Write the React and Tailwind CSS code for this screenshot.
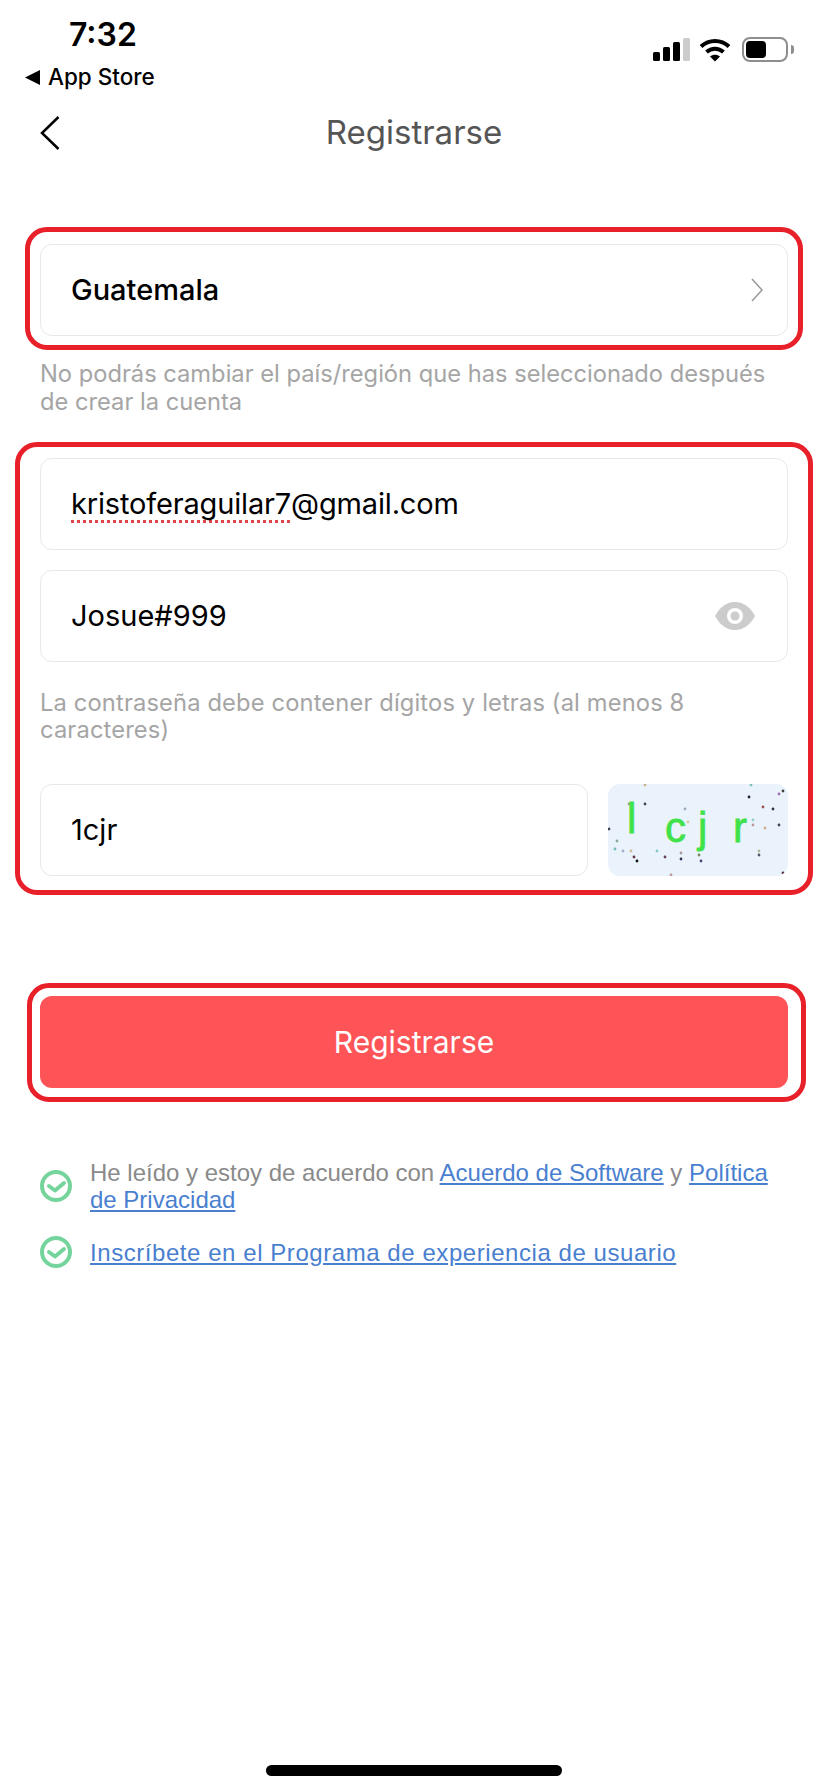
const dots = [
  [55, 15, '#c9b28f'], [161, 15, '#7fc4b8'], [193, 21, '#444'], [159, 27, '#223'], [189, 24, '#a070b0'],
  [39, 34, '#999'], [55, 34, '#444'], [173, 37, '#a05050'], [183, 39, '#334'], [95, 39, '#9ab'],
  [98, 52, '#d8c8a8'], [163, 50, '#9cc'], [189, 55, '#445'], [19, 59, '#445'], [163, 55, '#b99'],
  [175, 58, '#d0b090'], [27, 71, '#8a9'], [25, 79, '#7bb'], [33, 81, '#aac'], [41, 81, '#cb9'],
  [67, 81, '#8cc'], [91, 83, '#a99'], [109, 85, '#786'], [169, 81, '#ab9'], [169, 85, '#556'],
  [44, 87, '#634'], [47, 91, '#111'], [75, 87, '#645'], [91, 89, '#335'], [111, 91, '#547'],
  [81, 105, '#b99'], [193, 103, '#534'],
]

function Captcha() {
  return (
    <svg viewBox="0 0 180 92" className="h-[92px] w-[180px] shrink-0 rounded-xl bg-[#eaf3fc]">
      {dots.map(([x, y, c], i) => (
        <circle key={i} cx={x - 18} cy={y - 14} r="1.4" fill={c} />
      ))}
      <g fill="#3fe24a" stroke="#3fe24a" strokeWidth="0.8" fontFamily="Liberation Sans" fontSize="42">
        <text x="19" y="49">l</text>
        <text x="57" y="58">c</text>
        <text x="90" y="58">j</text>
        <text x="125" y="58">r</text>
      </g>
    </svg>
  )
}

function CheckIcon() {
  return (
    <svg viewBox="0 0 32 32" className="h-8 w-8 shrink-0" fill="none" stroke="#74d49c" strokeWidth="4">
      <circle cx="16" cy="16" r="14" />
      <path d="M9 16l6 4.500 9-7.500" strokeLinecap="round" strokeLinejoin="round" />
    </svg>
  )
}

// annotation frame drawn over the fields
function RedFrame({ className }) {
  return <div className={`pointer-events-none absolute rounded-[22px] border-[5px] border-[#e8202a] ${className}`} />
}

function Field({ children, className = '' }) {
  return (
    <div className={`flex h-[92px] items-center justify-between rounded-xl border border-[#e8e8e8] bg-white pl-[30px] pr-6 text-[29px] text-black ${className}`}>
      {children}
    </div>
  )
}

export default function App() {
  return (
    <div className="relative flex h-[1792px] w-[828px] flex-col overflow-hidden bg-white font-['Inter',sans-serif]">
      {/* Status bar */}
      <header className="flex h-[96px] justify-between pl-[25px] pr-[34px]">
        <div className="flex flex-col">
          <div className="mt-[16px] pl-[44px] text-[32px] font-semibold leading-[38px] text-black">7:32</div>
          <div className="mt-[10px] flex items-center gap-2 text-[22.500px] font-medium leading-[26px] text-black">
            <svg viewBox="0 0 15 15" className="h-[15px] w-[15px]"><path d="M15 0v15L0 7.5z" fill="#000" /></svg>
            App Store
          </div>
        </div>
        <div className="mt-[37px] flex h-[25px] items-center gap-[9px]">
          <svg viewBox="0 0 37 23" className="h-[23px] w-[37px]">
            <rect x="0" y="14" width="7" height="9" rx="1.5" fill="#000" />
            <rect x="10" y="9" width="7" height="14" rx="1.5" fill="#000" />
            <rect x="20" y="4" width="7" height="19" rx="1.5" fill="#000" />
            <rect x="30" y="0" width="7" height="23" rx="1.5" fill="#ccc" />
          </svg>
          <svg viewBox="0 0 32 24" className="h-[24px] w-[32px]" fill="none" stroke="#000" strokeWidth="4">
            <path d="M2 8.5C10 1 22 1 30 8.5" />
            <path d="M7.5 14c5-4.500 12-4.500 17 0" />
            <path d="M16 23.500l-5-5c3-2.500 7-2.500 10 0z" fill="#000" stroke="none" />
          </svg>
          <div className="ml-[2px] flex items-center gap-[3px]">
            <div className="h-[25px] w-[46px] rounded-[8px] border-2 border-[#8e8e8e] p-[2px]">
              <div className="h-full w-[20px] rounded-[4px] bg-black" />
            </div>
            <div className="h-[9px] w-[3px] rounded-r-full bg-[#8e8e8e]" />
          </div>
        </div>
      </header>

      {/* Nav */}
      <nav className="relative flex h-[72px] items-center justify-center">
        <svg viewBox="0 0 20 34" className="absolute left-[40px] top-[20px] h-[34px] w-[20px]" fill="none" stroke="#000" strokeWidth="2.500">
          <path d="M18.500 1L2 17l16.500 16" />
        </svg>
        <h1 className="text-[33px] font-normal leading-[38px] text-[#555]">Registrarse</h1>
      </nav>

      <main className="flex flex-col px-10">
        {/* Country */}
        <div className="relative mt-[76px]">
          <Field>
            <span className="font-medium">Guatemala</span>
            <svg viewBox="0 0 12 24" className="h-[24px] w-[12px]" fill="none" stroke="#999" strokeWidth="1.500">
              <path d="M1 1l10 11L1 23" />
            </svg>
          </Field>
          <RedFrame className="-inset-x-[15px] -bottom-[14px] -top-[17px]" />
        </div>
        <p className="mt-[24px] text-[23.700px] leading-[28px] text-[#a5a5a5]">
          No podrás cambiar el país/región que has seleccionado después de crear la cuenta
        </p>

        {/* Credentials */}
        <div className="relative mt-[42px]">
          <Field>
            <span className="tracking-[-0.16px]">
              <span className="underline decoration-[#e0454a] decoration-dotted decoration-[3px] underline-offset-[6px] [text-decoration-skip-ink:none]">kristoferaguilar7</span>
              @gmail.com
            </span>
          </Field>
          <Field className="mt-[20px]">
            Josue#999
            <svg viewBox="0 0 40 28" className="mr-[8px] h-[28px] w-[40px]">
              <path d="M0 14C5 4.500 12 0 20 0s15 4.500 20 14c-5 9.500-12 14-20 14S5 23.500 0 14z" fill="#ccc" />
              <circle cx="20" cy="14" r="8" fill="#fff" />
              <circle cx="20" cy="14" r="4.500" fill="#ccc" />
            </svg>
          </Field>
          <p className="mt-[27px] text-[23.700px] leading-[27px] tracking-[0.15px] text-[#a5a5a5]">
            La contraseña debe contener dígitos y letras (al menos 8 caracteres)
          </p>
          <div className="mt-[41px] flex gap-5">
            <Field className="flex-1">1cjr</Field>
            <Captcha />
          </div>
          <RedFrame className="-inset-x-[25px] -bottom-[19px] -top-[16px]" />
        </div>

        {/* Submit */}
        <div className="relative mt-[120px]">
          <button className="flex h-[92px] w-full items-center justify-center rounded-xl bg-[#ff5457] text-[30px] font-normal text-white">
            Registrarse
          </button>
          <RedFrame className="-bottom-[14px] -left-[13px] -right-[18px] -top-[13px]" />
        </div>

        {/* Agreements */}
        <div className="mt-[71px] flex flex-col gap-[23px] font-['Liberation_Sans',sans-serif] text-[24px] leading-[27px] text-[#8a8a8a]">
          <div className="flex items-center gap-[18px]">
            <CheckIcon />
            <p>
              He leído y estoy de acuerdo con <a className="text-[#4a7fd0] underline">Acuerdo de Software</a> y <a className="text-[#4a7fd0] underline">Política de Privacidad</a>
            </p>
          </div>
          <div className="flex items-center gap-[18px]">
            <CheckIcon />
            <a className="tracking-[0.56px] text-[#4a7fd0] underline">Inscríbete en el Programa de experiencia de usuario</a>
          </div>
        </div>
      </main>

      {/* Home indicator */}
      <div className="absolute bottom-[16px] left-[266px] h-[11px] w-[296px] rounded-full bg-black" />
    </div>
  )
}
